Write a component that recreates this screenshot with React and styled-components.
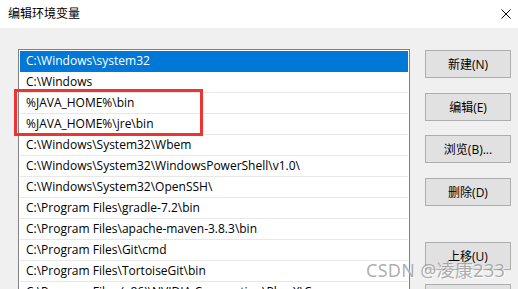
import React from 'react';
import styled, { createGlobalStyle } from 'styled-components';

const Global = createGlobalStyle`
    html, body {
        margin: 0;
        padding: 0;
        background: #f0f0f0;
    }
    body {
        font-family: "Open Sans", "Noto Sans CJK SC", sans-serif;
        font-size: 12px;
        color: #000;
    }
`;

const paths = [
    'C:\\Windows\\system32',
    'C:\\Windows',
    '%JAVA_HOME%\\bin',
    '%JAVA_HOME%\\jre\\bin',
    'C:\\Windows\\System32\\Wbem',
    'C:\\Windows\\System32\\WindowsPowerShell\\v1.0\\',
    'C:\\Windows\\System32\\OpenSSH\\',
    'C:\\Program Files\\gradle-7.2\\bin',
    'C:\\Program Files\\apache-maven-3.8.3\\bin',
    'C:\\Program Files\\Git\\cmd',
    'C:\\Program Files\\TortoiseGit\\bin',
    'C:\\Program Files (x86)\\NVIDIA Corporation\\PhysX\\Common',
];

const buttons = [
    { label: '新建(N)' },
    { label: '编辑(E)' },
    { label: '浏览(B)...' },
    { label: '删除(D)' },
    { label: '上移(U)', spaced: true },
    { label: '下移(O)' },
];

const Window = styled.div`
    position: relative;
    width: 518px;
    height: 289px;
    overflow: hidden;
    background: #f0f0f0;
`;

const TitleBar = styled.div`
    height: 28px;
    background: #fff;
    display: flex;
    align-items: center;
    justify-content: space-between;
    padding: 0 4px 0 8px;
    box-sizing: border-box;

    .title {
        font-family: "Noto Sans CJK SC", sans-serif;
        font-size: 12px;
        line-height: 1;
        margin-top: -2px;
    }
`;

const Body = styled.div`
    display: flex;
    align-items: flex-start;
    padding: 21px 0 0 18px;
    gap: 15px;
`;

const List = styled.div`
    position: relative;
    width: 392px;
    box-sizing: border-box;
    border: 1px solid #828282;
    background: #fff;
    padding: 1px;
`;

const Row = styled.div`
    height: 20px;
    line-height: 20px;
    padding-left: 6px;
    white-space: nowrap;
    overflow: hidden;
    border-bottom: 1px solid ${p => (p.$selected ? '#0078d7' : '#e8e8e8')};
    background: ${p => (p.$selected ? '#0078d7' : 'transparent')};
    color: ${p => (p.$selected ? '#fff' : '#000')};
`;

const Highlight = styled.div`
    position: absolute;
    left: -5px;
    top: 39px;
    width: 183px;
    height: 41px;
    border: 3px solid #ee3333;
`;

const Buttons = styled.div`
    display: flex;
    flex-direction: column;
    gap: 14.7px;
    margin-top: 1px;
`;

const Button = styled.button`
    width: 86px;
    height: 28px;
    margin-top: ${p => (p.$spaced ? '21px' : '0')};
    box-sizing: border-box;
    border: 1px solid #adadad;
    background: #e1e1e1;
    font-family: "Open Sans", "Noto Sans CJK SC", sans-serif;
    font-size: 12px;
    color: #000;
    padding: 0;
`;

const Watermark = styled.div`
    position: absolute;
    left: 366px;
    top: 256px;
    font-family: "Noto Sans", "Noto Sans CJK SC", sans-serif;
    font-size: 18px;
    letter-spacing: 0.3px;
    color: rgba(140, 140, 140, 0.7);
    text-shadow: 1px 1px 1px rgba(255, 255, 255, 0.9);
    white-space: nowrap;
`;

const Close = () => (
    <svg width="10" height="10" viewBox="0 0 10 10" style={{ marginRight: 3 }}>
        <path d="M0.5 0.5 L9.5 9.5 M9.5 0.5 L0.5 9.5" stroke="#000" strokeWidth="1" />
    </svg>
);

export default function App() {
    return (
        <Window>
            <Global />
            <TitleBar>
                <span className="title">编辑环境变量</span>
                <Close />
            </TitleBar>
            <Body>
                <List>
                    {paths.map((p, i) => (
                        <Row key={p} $selected={i === 0}>{p}</Row>
                    ))}
                    <Highlight />
                </List>
                <Buttons>
                    {buttons.map(b => (
                        <Button key={b.label} $spaced={b.spaced}>{b.label}</Button>
                    ))}
                </Buttons>
            </Body>
            <Watermark>CSDN @凌康233</Watermark>
        </Window>
    );
}
